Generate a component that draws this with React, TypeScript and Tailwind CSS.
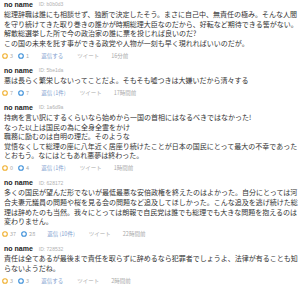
import React from 'react';

interface Post {
    id: string;
    lines: string[];
    good: number;
    bad: number;
    reply: string;
    time: string;
}

const posts: Post[] = [
    {
        id: 'b0b0d3',
        lines: [
            '総理辞職は誰にも相談せず、独断で決定したそう。まさに自己中、無責任の極み。そんな人間',
            'を守り続けてきた取り巻きの誰かが時期総理大臣なのだから、好転など期待できる筈がない。',
            '解散総選挙した所で今の政治家の誰に票を投じれば良いのだ?',
            'この国の未来を託す事ができる政党や人物が一刻も早く現れればいいのだが。',
        ],
        good: 3,
        bad: 1,
        reply: '返信する',
        time: '16分前',
    },
    {
        id: '5be1da',
        lines: ['悪は長らく繁栄しないってことだよ。そもそも嘘つきは大嫌いだから清々する'],
        good: 7,
        bad: 7,
        reply: '返信 (1件)',
        time: '17時間前',
    },
    {
        id: '1a6d9a',
        lines: [
            '持病を言い訳にするくらいなら始めから一国の首相にはなるべきではなかった!',
            'なった以上は国民の為に全身全霊をかけ',
            '職務に励むのは自明の理だ。そのような',
            '覚悟なくして総理の座に八年近く居座り続けたことが日本の国民にとって最大の不幸であった',
            'とおもう。なにはともあれ悪夢は終わった。',
        ],
        good: 0,
        bad: 4,
        reply: '返信 (1件)',
        time: '1時間前',
    },
    {
        id: '628172',
        lines: [
            '多くの国民が望んだ形でないが最低最悪な安倍政権を終えたのはよかった。自分にとっては河',
            '合夫妻元議員の問題や桜を見る会の問題など追及してほしかった。こんな追及を逃げ続けた総',
            '理は辞めたのも当然。我々にとっては朗報で自民党は誰でも総理でも大きな問題を抱えるのは',
            '変わりません。',
        ],
        good: 37,
        bad: 28,
        reply: '返信 (10件)',
        time: '22時間前',
    },
    {
        id: '728532',
        lines: [
            '責任は全てあるが最後まで責任を取らずに辞めるなら犯罪者でしょうよ、法律が有ることも知',
            'らないようだね。',
        ],
        good: 3,
        bad: 3,
        reply: '返信する',
        time: '2時間前',
    },
];

const Ring = ({ className }: { className: string }) => (
    <svg width="6" height="6" viewBox="0 0 6 6" className={className}>
        <circle cx="3" cy="3" r="2.3" fill="none" stroke="currentColor" strokeWidth="1.1" />
    </svg>
);

const App: React.FC = () => {
    return (
        <div className="w-[300px] h-[292px] overflow-hidden bg-white px-[4px] font-['Noto_Sans_CJK_JP',sans-serif]">
            <div className="flex flex-col gap-[5px]">
                {posts.map(p => (
                    <div key={p.id} className="flex flex-col">
                        <div className="h-[10px] flex items-center gap-[6px]">
                            <span className="text-[7px] font-bold text-[#222] font-['Liberation_Sans',sans-serif]">no name</span>
                            <span className="text-[5px] text-[#b0b0b0] font-['Liberation_Sans',sans-serif]">ID: {p.id}</span>
                        </div>
                        <div className="text-[7px] leading-[9.6px] text-[#333] whitespace-nowrap">
                            {p.lines.map((l, i) => (
                                <div key={i}>{l}</div>
                            ))}
                        </div>
                        <div className="mt-[2.5px] h-[10px] flex items-center text-[5.5px] text-[#aaa] -ml-[2px]">
                            <Ring className="text-[#f0b030]" />
                            <span className="ml-[2px]">{p.good}</span>
                            <Ring className="ml-[5px] text-[#3b8fd9]" />
                            <span className="ml-[2px]">{p.bad}</span>
                            <span className="ml-[12px] text-[#7f9fd0]">{p.reply}</span>
                            <span className="ml-[14px]">ツイート</span>
                            <span className="ml-[12px]">{p.time}</span>
                        </div>
                    </div>
                ))}
            </div>
        </div>
    );
};

export default App;
